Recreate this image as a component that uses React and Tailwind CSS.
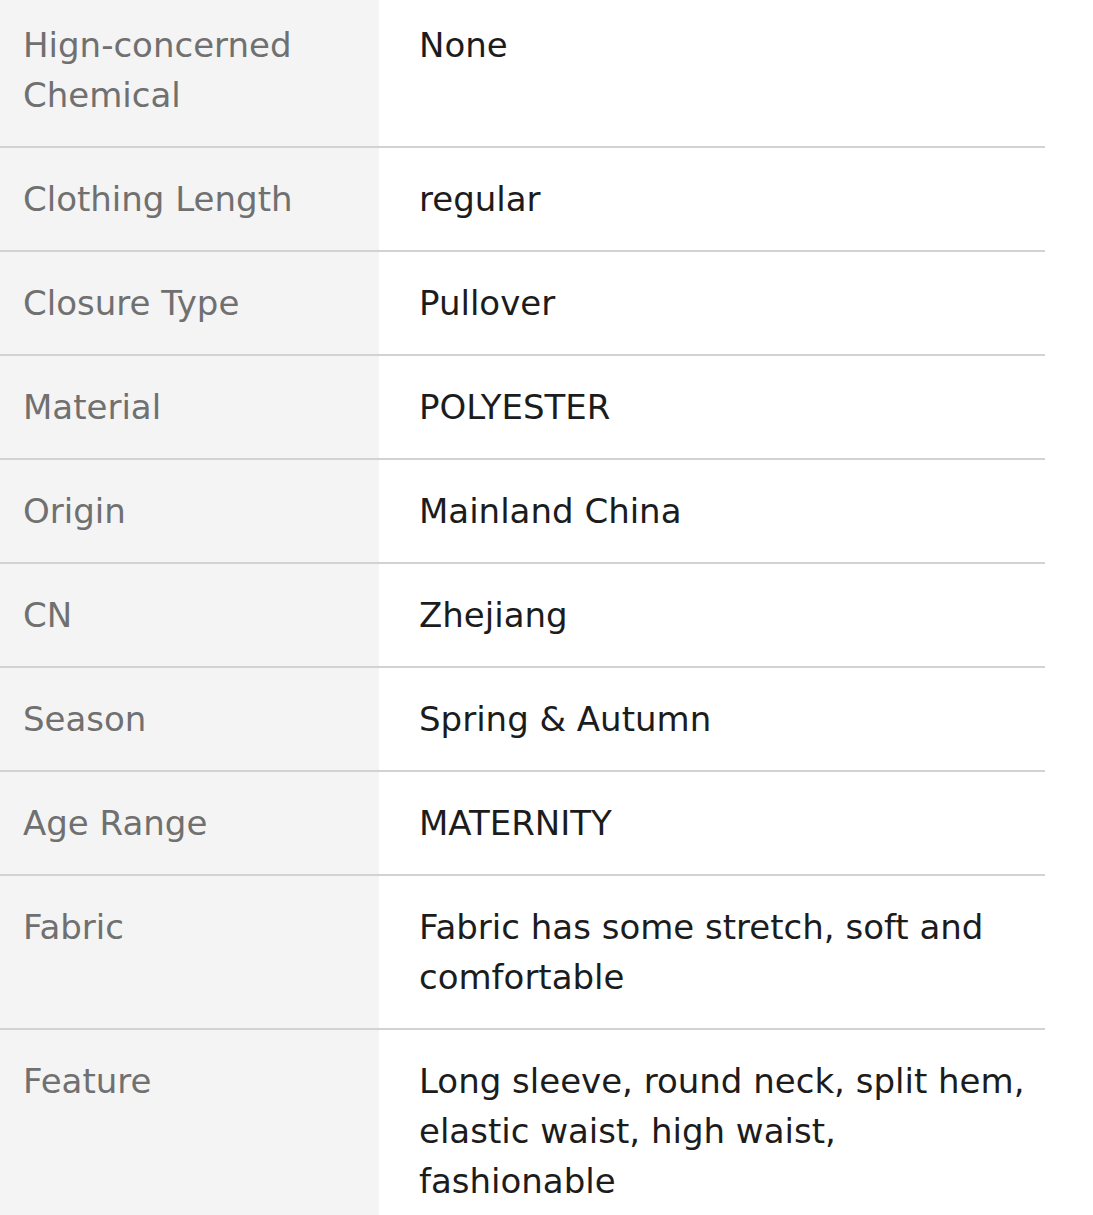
import React from 'react';

const SPECS = [
    ['Hign-concerned Chemical', 'None'],
    ['Clothing Length', 'regular'],
    ['Closure Type', 'Pullover'],
    ['Material', 'POLYESTER'],
    ['Origin', 'Mainland China'],
    ['CN', 'Zhejiang'],
    ['Season', 'Spring & Autumn'],
    ['Age Range', 'MATERNITY'],
    ['Fabric', 'Fabric has some stretch, soft and comfortable'],
    ['Feature', 'Long sleeve, round neck, split hem, elastic waist, high waist, fashionable'],
];

export default function App() {
    return (
        <div className="w-[1093px] h-[1215px] overflow-hidden bg-white font-['DejaVu_Sans','Liberation_Sans',sans-serif] text-[34px] leading-[50px]">
            <div className="w-[1045px] -mt-[6px]">
                {SPECS.map(([label, value], i) => (
                    <div key={label} className={`grid grid-cols-[379px_1fr] ${i > 0 ? 'border-t-2 border-[#d2d2d2]' : ''}`}>
                        <div className="bg-[#f4f4f4] pl-[23px] pr-4 py-[26px] text-[#707070]">{label}</div>
                        <div className="pl-[40px] pr-[14px] py-[26px] text-[#1c1c1c]">{value}</div>
                    </div>
                ))}
            </div>
        </div>
    );
}
